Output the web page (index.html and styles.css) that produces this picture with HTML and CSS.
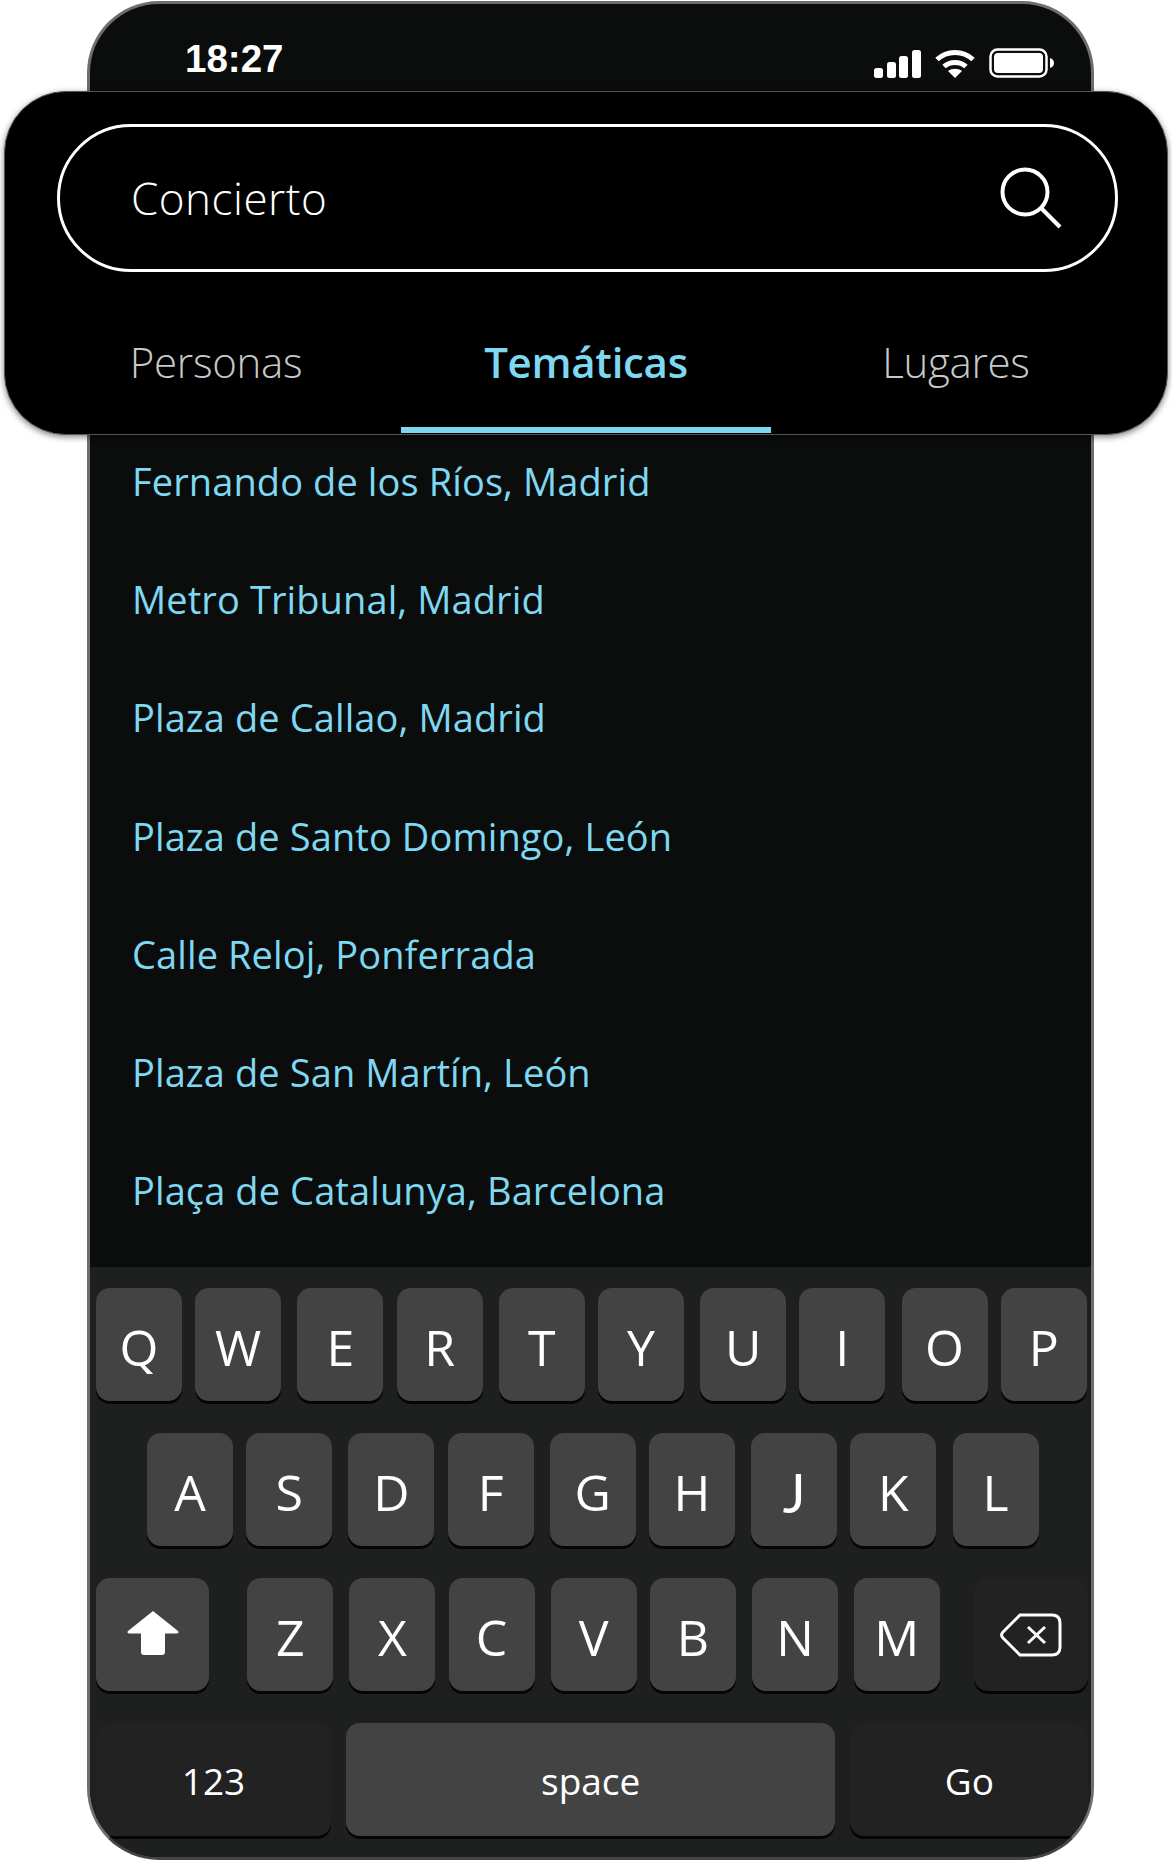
FILE: index.html
```html
<!DOCTYPE html>
<html lang="es">
<head>
    <meta charset="UTF-8">
    <title>Buscar</title>
    <link rel="stylesheet" href="styles.css">
</head>
<body>
    <div class="phone">
        <div class="status-bar">
            <span class="time">18:27</span>
            <div class="status-icons">
                <svg width="47" height="28" viewBox="0 0 47 28" fill="#fff">
                    <rect x="0" y="18" width="9" height="10" rx="2.5"/>
                    <rect x="13" y="12" width="9" height="16" rx="2.5"/>
                    <rect x="25" y="6" width="9" height="22" rx="2.5"/>
                    <rect x="38" y="0" width="9" height="28" rx="2.5"/>
                </svg>
                <svg width="40" height="29" viewBox="0 0 40 29" fill="none" stroke="#fff" stroke-width="5">
                    <path d="M2 10.5C12 1 28 1 38 10.5"/>
                    <path d="M9 17.5C15 12 25 12 31 17.5"/>
                    <path d="M20 29l-7-7c4-3 10-3 14 0z" fill="#fff" stroke="none"/>
                </svg>
                <svg width="65" height="30" viewBox="0 0 65 30" fill="none">
                    <rect x="1.5" y="1.5" width="56" height="27" rx="7" stroke="#fff" stroke-width="2.5"/>
                    <rect x="5" y="5" width="49" height="20" rx="4" fill="#fff"/>
                    <path d="M61 10c2.500 .5 4 2.500 4 5s-1.500 4.500-4 5z" fill="#fff"/>
                </svg>
            </div>
        </div>

        <div class="search-card">
            <div class="search-box">
                <span class="search-text">Concierto</span>
                <svg class="search-icon" width="62" height="62" viewBox="0 0 62 62" fill="none" stroke="#fff" stroke-width="4">
                    <circle cx="25" cy="25" r="22.500"/>
                    <path d="M41 41l19 19"/>
                </svg>
            </div>
            <div class="tabs">
                <a class="tab">Personas</a>
                <a class="tab active">Temáticas</a>
                <a class="tab">Lugares</a>
            </div>
        </div>

        <div class="results">
            <a class="result">Fernando de los Ríos, Madrid</a>
            <a class="result">Metro Tribunal, Madrid</a>
            <a class="result">Plaza de Callao, Madrid</a>
            <a class="result">Plaza de Santo Domingo, León</a>
            <a class="result">Calle Reloj, Ponferrada</a>
            <a class="result">Plaza de San Martín, León</a>
            <a class="result">Plaça de Catalunya, Barcelona</a>
        </div>

        <div class="keyboard">
            <div class="key-row">
                <div class="key">Q</div><div class="key">W</div><div class="key">E</div><div class="key">R</div><div class="key">T</div>
                <div class="key">Y</div><div class="key">U</div><div class="key">I</div><div class="key">O</div><div class="key">P</div>
            </div>
            <div class="key-row row-middle">
                <div class="key">A</div><div class="key">S</div><div class="key">D</div><div class="key">F</div><div class="key">G</div>
                <div class="key">H</div><div class="key key-j">J</div><div class="key">K</div><div class="key">L</div>
            </div>
            <div class="key-row">
                <div class="key key-shift">
                    <svg width="52" height="44" viewBox="0 0 52 44" fill="#fff">
                        <path d="M26 0L51 20q1.500 2-1 2.500H38V41q0 3-3 3H17q-3 0-3-3V22.500H2q-2.500-.5-1-2.500z"/>
                    </svg>
                </div>
                <div class="key">Z</div><div class="key">X</div><div class="key">C</div><div class="key">V</div>
                <div class="key">B</div><div class="key">N</div><div class="key key-m">M</div>
                <div class="key key-delete">
                    <svg width="62" height="44" viewBox="0 0 62 44" fill="none" stroke="#fff" stroke-width="3">
                        <path d="M20 2H52q8 0 8 8V34q0 8-8 8H20L3 25q-3-3 0-6z"/>
                        <path d="M28 14L45 30M45 14L28 30"/>
                    </svg>
                </div>
            </div>
            <div class="key-row row-bottom">
                <div class="key key-dark key-numbers">123</div>
                <div class="key key-space">space</div>
                <div class="key key-dark key-go">Go</div>
            </div>
        </div>
    </div>
</body>
</html>
```

FILE: styles.css
```css
body {
    margin: 0;
    background-color: #fff;
    font-family: "Open Sans", sans-serif;
}

.phone {
    box-sizing: border-box;
    display: flex;
    flex-direction: column;
    width: 1007px;
    height: 1859px;
    margin: 1px 0 0 87px;
    background-color: #0b0c0c;
    border: 3px solid #6e6e6e;
    border-bottom-color: #444;
    border-radius: 72px;
}

.status-bar {
    display: flex;
    justify-content: space-between;
    align-items: center;
    height: 87px;
    padding: 0 37px 0 95px;
    flex-shrink: 0;
}

.time {
    font-family: "Liberation Sans", sans-serif;
    font-weight: bold;
    font-size: 38.5px;
    color: #fff;
    margin-top: 22px;
}

.status-icons {
    display: flex;
    align-items: flex-end;
    gap: 14px;
    margin-top: 30px;
}

.search-card {
    position: relative;
    box-sizing: border-box;
    flex-shrink: 0;
    height: 344px;
    margin: 0 -77px 0 -86px;
    padding: 32px 49px 0 52px;
    background-color: #000;
    border: 1px solid #555;
    border-radius: 62px;
    box-shadow: 0 2px 6px rgba(0, 0, 0, 0.5);
}

.search-box {
    box-sizing: border-box;
    display: flex;
    justify-content: space-between;
    align-items: center;
    height: 148px;
    padding: 0 53px 0 71px;
    border: 3px solid #fff;
    border-radius: 74px;
}

.search-text {
    font-size: 44px;
    font-weight: 300;
    letter-spacing: 0.5px;
    color: #fff;
}

.tabs {
    display: flex;
    margin: 61px 0 0 -26px;
}

.tab {
    box-sizing: border-box;
    width: 370px;
    height: 100px;
    flex-shrink: 0;
    line-height: 57px;
    text-align: center;
    font-size: 42px;
    font-weight: 300;
    letter-spacing: -0.3px;
    color: #c8c8c8;
}

.tab.active {
    font-weight: 600;
    color: #7fd8f2;
    border-bottom: 6px solid #7fd8f2;
}

.results {
    flex: 1;
    display: flex;
    flex-direction: column;
    gap: 70.2px;
    padding: 22px 0 0 42px;
}

.result {
    height: 48px;
    line-height: 48px;
    font-size: 38px;
    letter-spacing: 0.1px;
    color: #7fd8f2;
}

.keyboard {
    display: flex;
    flex-direction: column;
    gap: 32px;
    height: 590px;
    box-sizing: border-box;
    padding: 21px 2px 0 6px;
    background-color: #1e1f1f;
    border-radius: 0 0 69px 69px;
    overflow: hidden;
    flex-shrink: 0;
}

.key-row {
    display: flex;
    gap: 13.2px;
}

.row-middle {
    padding-left: 51px;
}

.key {
    box-sizing: border-box;
    display: flex;
    justify-content: center;
    align-items: center;
    width: 86px;
    height: 113px;
    padding-top: 5px;
    flex-shrink: 0;
    background-color: #434343;
    border-radius: 14px;
    box-shadow: 0 3px 0 #050505;
    font-size: 50px;
    color: #fff;
}

.key:nth-child(even) {
    margin-right: 3px;
}

.key-j {
    font-family: Lato, sans-serif;
    font-size: 54px;
}

.key-shift {
    width: 113px;
    margin-right: 25px;
    padding: 0 0 3px;
}

.key-m {
    margin-left: 2.4px;
}

.key-delete {
    width: 114px;
    margin-left: 18.6px;
    padding-top: 0;
    background-color: #222;
}

.row-bottom .key {
    font-size: 37px;
    margin-right: 0;
    padding-top: 2px;
}

.key-dark {
    background-color: #222;
}

.key-numbers {
    width: 235px;
}

.row-bottom .key-space {
    width: 489px;
    margin: 0 2px;
}

.key-go {
    width: 238px;
}
```
